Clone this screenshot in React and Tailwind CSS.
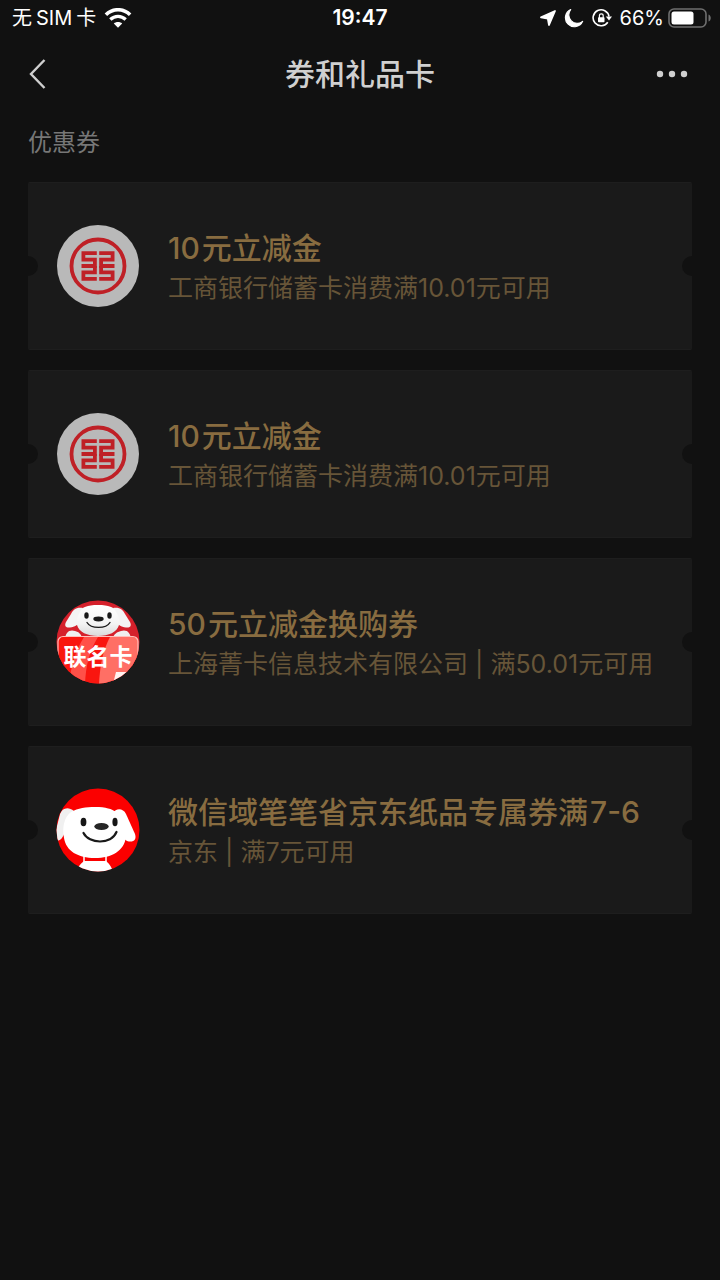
import React from "react";

const coupons = [
  { id: 1, logo: "icbc", title: "10元立减金", desc: "工商银行储蓄卡消费满10.01元可用" },
  { id: 2, logo: "icbc", title: "10元立减金", desc: "工商银行储蓄卡消费满10.01元可用" },
  { id: 3, logo: "joint", title: "50元立减金换购券", desc: "上海菁卡信息技术有限公司 | 满50.01元可用" },
  { id: 4, logo: "jd", title: "微信域笔笔省京东纸品专属券满7-6", desc: "京东 | 满7元可用" },
];

const IcbcLogo = () => (
  <svg viewBox="0 0 84 84" className="size-21 shrink-0" aria-hidden="true">
    <circle cx="42" cy="42" r="41" fill="#b9b9b9" />
    <circle cx="42" cy="42" r="26.5" fill="none" stroke="#bf2026" strokeWidth="3.8" />
    <g fill="none" stroke="#bf2026" strokeWidth="3.8">
      <path d="M40.8 29.2H27.4V35.600H38.900V42H25.500" />
      <path d="M43.2 29.2H56.600V35.600H45.100V42H58.500" />
      <path d="M38.900 42V48.400H27.400V54.800H40.800" />
      <path d="M45.100 42V48.400H56.600V54.800H43.200" />
    </g>
  </svg>
);

const JointCardLogo = () => (
  <svg viewBox="0 0 84 84" className="size-21 shrink-0" role="img" aria-label="联名卡">
    <defs>
      <clipPath id="joint-clip">
        <circle cx="42" cy="42" r="41.500" />
      </clipPath>
      <linearGradient id="joint-face" x1="0" y1="0" x2="0" y2="1">
        <stop offset="0" stopColor="#ffffff" />
        <stop offset="0.6" stopColor="#f4f4f4" />
        <stop offset="1" stopColor="#dadada" />
      </linearGradient>
    </defs>
    <g clipPath="url(#joint-clip)">
      <rect width="84" height="84" fill="#d5202b" />
      <path d="M27 8C20 7 17 10 15 14L10 22C8 26 10 28 14 27.500C19 27 22 25 24 21Z" fill="#f4f4f4" />
      <path d="M57 8C64 7 67 10 69 14L74 22C76 26 74 28 70 27.500C65 27 62 25 60 21Z" fill="#f4f4f4" />
      <path d="M9 40C9 32 14 29 19 31C23 32 25 34 26 38Z" fill="#efefef" />
      <path d="M75 40C75 32 70 29 65 31C61 32 58 34 57 38Z" fill="#efefef" />
      <path d="M42 5C53 5 58 7 60 12C63 17 64 21 63 25C61 32 53 36 42 36C31 36 23 32 21 25C20 21 21 17 24 12C26 7 31 5 42 5Z" fill="url(#joint-face)" />
      <ellipse cx="30.500" cy="15.500" rx="2.200" ry="3.300" fill="#191919" />
      <ellipse cx="53.500" cy="15.500" rx="2.200" ry="3.300" fill="#191919" />
      <ellipse cx="42.500" cy="19" rx="5.200" ry="2.400" fill="#191919" />
      <path d="M31 22.500C35 29 50 29 54 22.500" fill="none" stroke="#191919" strokeWidth="1.400" strokeLinecap="round" />
      <rect x="2" y="36.500" width="80" height="56" rx="5" fill="#f9160f" />
      <path d="M28 37H42C33 52 30 65 29 84H13C15 65 20 50 28 37Z" fill="#ff5048" />
      <path d="M54 37H77C81 37 82 39 82 42V84H43C44 65 47 50 54 37Z" fill="#ff6f65" />
      <path d="M60 72H84V84H57Z" fill="#fff3f1" />
      <rect x="2" y="36.500" width="80" height="56" rx="5" fill="none" stroke="#ffc0bb" strokeWidth="1.200" />
    </g>
    <text x="42" y="65" textAnchor="middle" fill="#fff" fontSize="23" fontWeight="700">
      联名卡
    </text>
  </svg>
);

const JdLogo = () => (
  <svg viewBox="0 0 84 84" className="size-21 shrink-0" aria-hidden="true">
    <defs>
      <clipPath id="jd-clip">
        <circle cx="42" cy="42" r="41.500" />
      </clipPath>
    </defs>
    <g clipPath="url(#jd-clip)">
      <rect width="84" height="84" fill="#fb0000" />
      <path d="M18 23C12 18 6 20 4 26L0 42V53C5 53 7 49 9 44Z" fill="#f0f0f0" />
      <path d="M57 25C60 20 67 20 70 26L79 46C81 52 77 55 71 53L64 48Z" fill="#fff" />
      <path d="M15 24C22 20 30 19 39 19C50 19 56 21 60 24C67 30 71 40 70 49C68 63 56 70 39 70C22 70 10 63 8 50C6 40 8 29 15 24Z" fill="#fff" />
      <path d="M28 73H50C54 76 56 80 57 84H20C21 80 24 76 28 73Z" fill="#fff" />
      <path d="M28 68V74M50 68V74" stroke="#fff" strokeWidth="1.500" />
      <ellipse cx="27.500" cy="34" rx="2.900" ry="4.300" fill="#161616" />
      <ellipse cx="59" cy="34" rx="2.600" ry="4.300" fill="#161616" />
      <ellipse cx="45.500" cy="38.500" rx="7.200" ry="3.500" fill="#262626" />
      <path d="M27.500 45C33 56 55 57 60.500 44" fill="none" stroke="#191919" strokeWidth="2.200" strokeLinecap="round" />
    </g>
  </svg>
);

const logos = { icbc: IcbcLogo, joint: JointCardLogo, jd: JdLogo };

// a little room between digits and the characters next to them
const SpacedText = ({ text }) =>
  text
    .split(/([0-9A-Za-z.-]+)/)
    .filter(Boolean)
    .map((part, i) =>
      /[0-9A-Za-z]/.test(part) ? (
        <span key={i} className={i === 0 ? "mr-0.5" : "ml-0.5"}>
          {part}
        </span>
      ) : (
        part
      )
    );

const StatusBar = () => (
  <div className="flex h-9 items-center justify-between px-2 text-xl text-white">
    <div className="flex flex-1 items-center gap-2">
      <span className="ml-1">
        无<span className="mx-1">SIM</span>卡
      </span>
      <svg viewBox="0 0 26 19" className="h-5 w-7" aria-hidden="true">
        <path d="M1.500 6.500C8 0 18 0 24.500 6.500" fill="none" stroke="#fff" strokeWidth="3.400" />
        <path d="M5.700 11C10 7 16 7 20.300 11" fill="none" stroke="#fff" strokeWidth="3.200" />
        <path d="M13 18.800L9 14.700C11 12.800 15 12.800 17 14.700Z" fill="#fff" />
      </svg>
    </div>
    <span className="text-[21px] font-semibold">19:47</span>
    <div className="flex flex-1 items-center justify-end gap-2">
      <svg viewBox="0 0 16 16" className="size-4" aria-hidden="true">
        <path d="M15 1L9 15L7.800 8.500L1 7.400Z" fill="#fff" stroke="#fff" strokeWidth="1.800" strokeLinejoin="round" />
      </svg>
      <svg viewBox="0 0 18 18" className="size-5" aria-hidden="true">
        <path d="M6 1.400A8.100 8.100 0 1 0 16.800 12A7.600 7.600 0 0 1 6 1.400Z" fill="#fff" stroke="#fff" strokeLinejoin="round" />
      </svg>
      <svg viewBox="0 0 20 18" className="h-5 w-5" aria-hidden="true">
        <path d="M15.800 13.200A8 8 0 1 1 17 7.500" fill="none" stroke="#fff" strokeWidth="1.600" />
        <path d="M13.800 7.500H20L17 11.500Z" fill="#fff" />
        <rect x="6" y="8.300" width="6.500" height="5" rx="0.800" fill="#fff" />
        <path d="M7.400 9V6.800A1.900 1.900 0 0 1 11.200 6.800V9" fill="none" stroke="#fff" strokeWidth="1.200" />
      </svg>
      <div className="flex items-center gap-1">
        <span>66%</span>
        <svg viewBox="0 0 44 20" className="h-5 w-11" aria-hidden="true">
          <rect x="1" y="1" width="37" height="18" rx="5" fill="none" stroke="#6f6f6f" strokeWidth="1.600" />
          <rect x="3.500" y="3.500" width="22" height="13" rx="2.500" fill="#fff" />
          <path d="M40.500 6.500C43.500 7.500 43.500 12.500 40.500 13.500Z" fill="#6f6f6f" />
        </svg>
      </div>
    </div>
  </div>
);

const CouponCard = ({ logo, title, desc }) => {
  const Logo = logos[logo];
  return (
    <li className="relative flex h-42 items-center gap-7 overflow-hidden rounded-xs border-y border-[#1e1e1e] bg-[#1a1a1a] px-7">
      <span className="absolute top-1/2 -left-2.5 size-5 -translate-y-1/2 rounded-full bg-[#111111]" />
      <span className="absolute top-1/2 -right-2.5 size-5 -translate-y-1/2 rounded-full bg-[#111111]" />
      <Logo />
      <div className="min-w-0 pt-1">
        <h2 className="text-[30px] leading-10 font-medium text-[#886c40]">
          <SpacedText text={title} />
        </h2>
        <p className="text-[25px] leading-10 text-[#675538]">{desc}</p>
      </div>
    </li>
  );
};

const App = () => {
  return (
    <div className="min-h-screen bg-[#111111] font-[Inter,'Noto_Sans_CJK_SC',sans-serif]">
      <StatusBar />
      <header className="flex h-19 items-center justify-between px-7">
        <button type="button" aria-label="返回" className="flex flex-1">
          <svg viewBox="0 0 18 32" className="h-8 w-5" fill="none" stroke="#cfcfcf" strokeWidth="2.400" aria-hidden="true">
            <path d="M15.500 2L2 16L15.500 30" />
          </svg>
        </button>
        <h1 className="text-[30px] font-medium text-[#d0d0d0]">券和礼品卡</h1>
        <button type="button" aria-label="更多" className="flex flex-1 justify-end">
          <svg viewBox="0 0 32 8" className="mr-1 h-2 w-8" fill="#d0d0d0" aria-hidden="true">
            <circle cx="4" cy="4" r="3.200" />
            <circle cx="16" cy="4" r="3.200" />
            <circle cx="28" cy="4" r="3.200" />
          </svg>
        </button>
      </header>
      <main className="px-7 pt-3">
        <p className="pb-5 text-[24px] leading-[38px] text-[#777777]">优惠券</p>
        <ul className="flex flex-col gap-5">
          {coupons.map((coupon) => (
            <CouponCard key={coupon.id} logo={coupon.logo} title={coupon.title} desc={coupon.desc} />
          ))}
        </ul>
      </main>
    </div>
  );
};

export default App;
